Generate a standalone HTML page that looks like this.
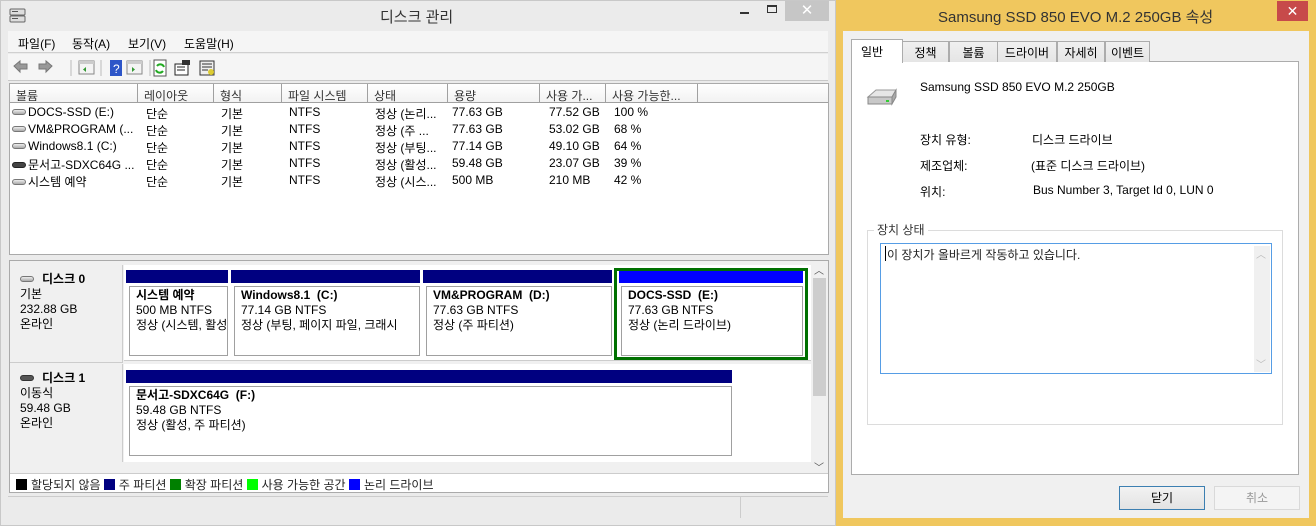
<!DOCTYPE html>
<html><head><meta charset="utf-8"><style>
*{margin:0;padding:0;box-sizing:border-box}
body{width:1316px;height:526px;position:relative;overflow:hidden;background:#f0f0f0;font-family:"Liberation Sans","Noto Sans CJK KR",sans-serif;font-size:12px;color:#000}
.a{position:absolute;white-space:nowrap}
.hdr{position:absolute;top:84px;height:19px;border-right:1px solid #a0a0a0;border-bottom:1px solid #a0a0a0;background:linear-gradient(#fff,#f2f2f2);padding:3px 0 0 6px;color:#333}
.row{position:absolute;left:10px;height:17px;width:700px}
.row span{position:absolute;top:1px}
.disk{width:14px;height:6px;border:1px solid #777;border-radius:3px;background:linear-gradient(#eee,#aaa);display:inline-block;margin-right:2px;vertical-align:1px}
.pb{position:absolute;background:#000080}
.pbox{position:absolute;background:#fff;border:1px solid #a0a0a0;padding:1px 6px;line-height:15px;white-space:nowrap}
.pbox b{font-weight:bold}
.lg{display:inline-block;width:11px;height:11px;vertical-align:-1px;margin:0 4px 0 0}
.tab{position:absolute;top:41px;height:21px;border:1px solid #acacac;border-bottom:none;background:linear-gradient(#f0f0f0,#e5e5e5);text-align:center;padding-top:2px}
</style></head><body>
<div class="a" style="left:0;top:0;width:836px;height:526px;background:#ebebeb;border:1px solid #c8c8c8"></div>
<svg class="a" style="left:9px;top:8px" width="18" height="16"><rect x="1" y="1" width="15" height="6" rx="1" fill="#ddd" stroke="#666"/><rect x="1" y="8" width="15" height="6" rx="1" fill="#ddd" stroke="#666"/><rect x="3" y="3" width="6" height="1" fill="#555"/><rect x="3" y="10" width="6" height="1" fill="#555"/></svg>
<div class="a" style="left:380px;top:6px;font-size:15px;color:#333">디스크 관리</div>
<div class="a" style="left:740px;top:12px;width:9px;height:2px;background:#333"></div>
<div class="a" style="left:767px;top:5px;width:10px;height:8px;border:1px solid #333;border-top-width:2px"></div>
<div class="a" style="left:785px;top:1px;width:44px;height:20px;background:#c6c6c6;color:#fff;text-align:center;font-size:15px;line-height:20px">✕</div>
<div class="a" style="left:8px;top:31px;width:820px;height:22px;background:#f5f5f5;border-bottom:1px solid #d0d0d0"></div>
<div class="a" style="left:18px;top:35px">파일(F)</div><div class="a" style="left:72px;top:35px">동작(A)</div><div class="a" style="left:128px;top:35px">보기(V)</div><div class="a" style="left:184px;top:35px">도움말(H)</div>
<div class="a" style="left:8px;top:54px;width:820px;height:27px;background:#f5f5f5;border-bottom:1px solid #c8c8c8"></div>
<svg class="a" style="left:12px;top:58px" width="210" height="20">
<path d="M2 8l6-5v3h7v5H8v3z" fill="#999" stroke="#777"/><path d="M40 8l-6-5v3h-7v5h7v3z" fill="#999" stroke="#777"/>
<line x1="59" y1="2" x2="59" y2="18" stroke="#bbb"/>
<rect x="67" y="3" width="15" height="13" fill="#f4f4f4" stroke="#888"/><rect x="67" y="3" width="15" height="3" fill="#ccc"/><path d="M74 9v5l-3-2.5z" fill="#393"/>
<line x1="89" y1="2" x2="89" y2="18" stroke="#bbb"/>
<rect x="98" y="2" width="12" height="16" fill="#2d55c8"/><text x="101" y="15" fill="#fff" font-size="12" font-family="Liberation Sans">?</text>
<rect x="115" y="3" width="15" height="13" fill="#f4f4f4" stroke="#888"/><rect x="115" y="3" width="15" height="3" fill="#ccc"/><path d="M120 9v5l3-2.5z" fill="#393"/>
<line x1="138" y1="2" x2="138" y2="18" stroke="#bbb"/>
<rect x="142" y="2" width="12" height="16" fill="#fff" stroke="#555"/><path d="M145 8a4 4 0 0 1 7 1M151 13a4 4 0 0 1-7-1" stroke="#2a2" stroke-width="2" fill="none"/>
<rect x="163" y="6" width="13" height="11" fill="#fff" stroke="#222"/><path d="M165 9h8M165 12h8" stroke="#222"/><rect x="170" y="2" width="8" height="5" fill="#333"/>
<rect x="188" y="3" width="14" height="14" fill="#eee" stroke="#333"/><path d="M190 6h10M190 9h10M190 12h6" stroke="#333"/><circle cx="199" cy="14" r="3" fill="#dc3"/>
</svg>
<div class="a" style="left:9px;top:83px;width:820px;height:172px;background:#fff;border:1px solid #aaa"></div>
<div class="hdr" style="left:10px;width:128px">볼륨</div>
<div class="hdr" style="left:138px;width:76px">레이아웃</div>
<div class="hdr" style="left:214px;width:68px">형식</div>
<div class="hdr" style="left:282px;width:86px">파일 시스템</div>
<div class="hdr" style="left:368px;width:80px">상태</div>
<div class="hdr" style="left:448px;width:92px">용량</div>
<div class="hdr" style="left:540px;width:66px">사용 가...</div>
<div class="hdr" style="left:606px;width:92px">사용 가능한...</div>
<div class="hdr" style="left:698px;width:130px;border-right:none"></div>
<div class="row" style="top:104px"><span style="left:2px"><i class="disk"></i>DOCS-SSD (E:)</span><span style="left:136px">단순</span><span style="left:211px">기본</span><span style="left:279px">NTFS</span><span style="left:365px">정상 (논리...</span><span style="left:442px">77.63 GB</span><span style="left:539px">77.52 GB</span><span style="left:604px">100 %</span></div>
<div class="row" style="top:121px"><span style="left:2px"><i class="disk"></i>VM&amp;PROGRAM (...</span><span style="left:136px">단순</span><span style="left:211px">기본</span><span style="left:279px">NTFS</span><span style="left:365px">정상 (주 ...</span><span style="left:442px">77.63 GB</span><span style="left:539px">53.02 GB</span><span style="left:604px">68 %</span></div>
<div class="row" style="top:138px"><span style="left:2px"><i class="disk"></i>Windows8.1 (C:)</span><span style="left:136px">단순</span><span style="left:211px">기본</span><span style="left:279px">NTFS</span><span style="left:365px">정상 (부팅...</span><span style="left:442px">77.14 GB</span><span style="left:539px">49.10 GB</span><span style="left:604px">64 %</span></div>
<div class="row" style="top:155px"><span style="left:2px"><i class="disk" style="background:#444;border-color:#222"></i>문서고-SDXC64G ...</span><span style="left:136px">단순</span><span style="left:211px">기본</span><span style="left:279px">NTFS</span><span style="left:365px">정상 (활성...</span><span style="left:442px">59.48 GB</span><span style="left:539px">23.07 GB</span><span style="left:604px">39 %</span></div>
<div class="row" style="top:172px"><span style="left:2px"><i class="disk"></i>시스템 예약</span><span style="left:136px">단순</span><span style="left:211px">기본</span><span style="left:279px">NTFS</span><span style="left:365px">정상 (시스...</span><span style="left:442px">500 MB</span><span style="left:539px">210 MB</span><span style="left:604px">42 %</span></div>
<div class="a" style="left:9px;top:260px;width:820px;height:233px;background:#f0f0f0;border:1px solid #aaa"></div>
<div class="a" style="left:10px;top:265px;width:113px;height:98px;background:#f0f0f0;border-right:1px solid #ccc;border-bottom:1px solid #ccc;line-height:15px;padding:7px 0 0 10px">
<div style="font-weight:bold"><i class="disk" style="margin-right:8px"></i>디스크 0</div>기본<br>232.88 GB<br>온라인</div>
<div class="a" style="left:10px;top:364px;width:113px;height:98px;background:#f0f0f0;border-right:1px solid #ccc;line-height:15px;padding:7px 0 0 10px">
<div style="font-weight:bold"><i class="disk" style="background:#555;border-color:#333;margin-right:8px"></i>디스크 1</div>이동식<br>59.48 GB<br>온라인</div>
<div class="a" style="left:124px;top:265px;width:687px;height:96px;background:#fff;border-bottom:1px solid #ccc"></div>
<div class="a" style="left:124px;top:364px;width:687px;height:98px;background:#fff"></div>
<div class="pb" style="left:126px;top:270px;width:102px;height:13px"></div>
<div class="pbox" style="left:129px;top:286px;width:99px;height:70px;overflow:hidden"><b>시스템 예약</b><br>500 MB NTFS<br>정상 (시스템, 활성</div>
<div class="pb" style="left:231px;top:270px;width:189px;height:13px"></div>
<div class="pbox" style="left:234px;top:286px;width:186px;height:70px;overflow:hidden"><b>Windows8.1 &nbsp;(C:)</b><br>77.14 GB NTFS<br>정상 (부팅, 페이지 파일, 크래시</div>
<div class="pb" style="left:423px;top:270px;width:189px;height:13px"></div>
<div class="pbox" style="left:426px;top:286px;width:186px;height:70px;overflow:hidden"><b>VM&amp;PROGRAM &nbsp;(D:)</b><br>77.63 GB NTFS<br>정상 (주 파티션)</div>
<div class="a" style="left:614px;top:268px;width:194px;height:92px;border:3px solid #007000;background:#fff"></div>
<div class="pb" style="left:619px;top:271px;width:184px;height:12px;background:#0000ff"></div>
<div class="pbox" style="left:621px;top:286px;width:182px;height:70px"><b>DOCS-SSD &nbsp;(E:)</b><br>77.63 GB NTFS<br>정상 (논리 드라이브)</div>
<div class="pb" style="left:126px;top:370px;width:606px;height:13px"></div>
<div class="pbox" style="left:129px;top:386px;width:603px;height:70px"><b>문서고-SDXC64G &nbsp;(F:)</b><br>59.48 GB NTFS<br>정상 (활성, 주 파티션)</div>
<div class="a" style="left:811px;top:265px;width:17px;height:207px;background:#f0f0f0"></div>
<div class="a" style="left:813px;top:278px;width:13px;height:118px;background:#cdcdcd"></div>
<div class="a" style="left:814px;top:262px;font-size:10px;color:#555">︿</div>
<div class="a" style="left:814px;top:459px;font-size:10px;color:#555">﹀</div>
<div class="a" style="left:10px;top:473px;width:818px;height:19px;background:#fff;border-top:1px solid #ccc;padding:2px 0 0 6px;color:#222">
<i class="lg" style="background:#000"></i>할당되지 않음 <i class="lg" style="background:#000080"></i>주 파티션 <i class="lg" style="background:#008000"></i>확장 파티션 <i class="lg" style="background:#00ff00"></i>사용 가능한 공간 <i class="lg" style="background:#0000ff"></i>논리 드라이브</div>
<div class="a" style="left:8px;top:496px;width:820px;height:22px;border-top:1px solid #ccc"></div>
<div class="a" style="left:740px;top:496px;width:1px;height:22px;background:#ccc"></div>
<div class="a" style="left:836px;top:0;width:480px;height:526px;background:#f0c75e"></div>
<div class="a" style="left:938px;top:6px;font-size:15px;color:#333">Samsung SSD 850 EVO M.2 250GB 속성</div>
<div class="a" style="left:1277px;top:1px;width:31px;height:20px;background:#c74a4a;color:#fff;text-align:center;font-size:14px;line-height:20px">✕</div>
<div class="a" style="left:843px;top:31px;width:466px;height:487px;background:#f0f0f0"></div>
<div class="a" style="left:851px;top:61px;width:448px;height:414px;background:#fff;border:1px solid #acacac"></div>
<div class="tab" style="left:902px;width:47px">정책</div>
<div class="tab" style="left:949px;width:49px">볼륨</div>
<div class="tab" style="left:997px;width:60px">드라이버</div>
<div class="tab" style="left:1057px;width:48px">자세히</div>
<div class="tab" style="left:1105px;width:45px">이벤트</div>
<div class="tab" style="left:851px;top:39px;width:52px;height:24px;background:#fff;text-align:left;padding:3px 0 0 9px">일반</div>
<svg class="a" style="left:866px;top:86px" width="34" height="22"><path d="M2 11l8-7h20l-4 7z" fill="#e6e6e6" stroke="#999"/><path d="M2 11h24v7H2z" fill="#c8c8c8" stroke="#888"/><path d="M26 11l4-7v7l-4 7z" fill="#aaa" stroke="#888"/><rect x="20" y="14" width="3" height="2" fill="#3c3"/></svg>
<div class="a" style="left:920px;top:80px">Samsung SSD 850 EVO M.2 250GB</div>
<div class="a" style="left:920px;top:131px">장치 유형:</div><div class="a" style="left:1032px;top:131px">디스크 드라이브</div>
<div class="a" style="left:920px;top:157px">제조업체:</div><div class="a" style="left:1031px;top:157px">(표준 디스크 드라이브)</div>
<div class="a" style="left:920px;top:183px">위치:</div><div class="a" style="left:1033px;top:183px">Bus Number 3, Target Id 0, LUN 0</div>
<div class="a" style="left:867px;top:230px;width:416px;height:195px;border:1px solid #dcdcdc"></div>
<div class="a" style="left:874px;top:221px;background:#fff;padding:0 3px;color:#333">장치 상태</div>
<div class="a" style="left:880px;top:243px;width:392px;height:131px;border:1px solid #569de5;background:#fff"></div>
<div class="a" style="left:1254px;top:246px;width:16px;height:126px;background:#f0f0f0"></div>
<div class="a" style="left:1256px;top:246px;font-size:10px;color:#bbb">︿</div>
<div class="a" style="left:1256px;top:356px;font-size:10px;color:#bbb">﹀</div>
<div class="a" style="left:885px;top:246px;width:1px;height:15px;background:#000"></div>
<div class="a" style="left:887px;top:246px;color:#222">이 장치가 올바르게 작동하고 있습니다.</div>
<div class="a" style="left:1119px;top:486px;width:86px;height:24px;border:1px solid #3c7fb1;background:linear-gradient(#f2f2f2,#e3e3e3);text-align:center;line-height:22px">닫기</div>
<div class="a" style="left:1214px;top:486px;width:86px;height:24px;border:1px solid #d9d9d9;background:#f4f4f4;text-align:center;line-height:22px;color:#999">취소</div>
</body></html>
